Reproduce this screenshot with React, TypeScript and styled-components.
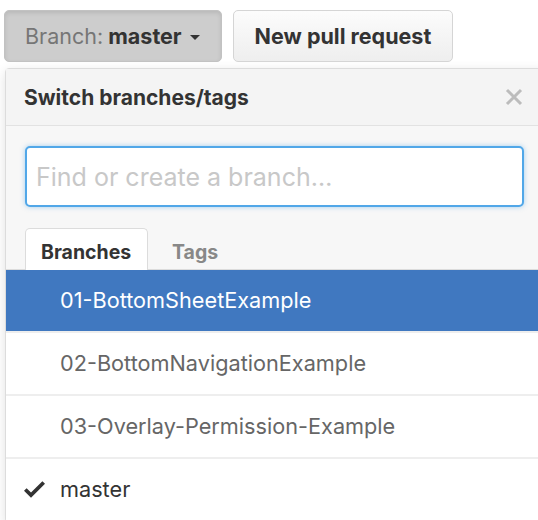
import React from "react";
import styled, { createGlobalStyle } from "styled-components";

const Global = createGlobalStyle`
  html, body { margin: 0; padding: 0; background: #fff; overflow: hidden; }
  body { font-family: Inter, "Liberation Sans", Arial, sans-serif; }
`;

const FONT = `Inter, "Liberation Sans", Arial, sans-serif`;

const Page = styled.div`
  width: 538px;
  height: 520px;
  overflow: hidden;
`;

const Toolbar = styled.div`
  display: flex;
  gap: 11px;
  padding: 10px 0 0 4px;
`;

const Button = styled.button<{ $pressed?: boolean }>`
  height: 52px;
  padding: 0 21px 0 ${(p) => (p.$pressed ? "20px" : "21px")};
  border-radius: 5px;
  font-family: ${FONT};
  font-size: 21.5px;
  font-weight: 700;
  color: #333;
  display: flex;
  align-items: center;
  gap: 7px;
  border: 1px solid ${(p) => (p.$pressed ? "#c2c2c2" : "#d5d5d5")};
  background: ${(p) =>
    p.$pressed ? "#cdcdcd" : "linear-gradient(#fcfcfc, #eeeeee)"};
  box-shadow: ${(p) => (p.$pressed ? "inset 0 2px 4px rgba(0,0,0,0.1)" : "none")};
`;

const Muted = styled.span`
  color: #767676;
  font-weight: normal;
`;

const Caret = styled.span`
  width: 0;
  height: 0;
  border-left: 5px solid transparent;
  border-right: 5px solid transparent;
  border-top: 5px solid #333;
  margin-left: 1px;
  margin-top: 3px;
`;

const Panel = styled.div`
  margin: 6px 0 0 5px;
  width: 540px;
  border: 1px solid #dcdcdc;
  border-radius: 4px;
  background: #f7f7f7;
  box-shadow: 0 3px 12px rgba(0, 0, 0, 0.12);
`;

const Header = styled.div`
  height: 57px;
  display: flex;
  align-items: center;
  justify-content: space-between;
  padding: 0 14px 0 18px;
  background: #f4f4f4;
  border-bottom: 1px solid #e2e2e2;
  box-sizing: border-box;
  width: 532px;
`;

const Title = styled.span`
  font-size: 21px;
  font-weight: 700;
  color: #333;
`;

const Close = styled.svg`
  width: 20px;
  height: 20px;
`;

const FilterArea = styled.div`
  padding: 20px 19px 0 19px;
`;

const Input = styled.input`
  box-sizing: border-box;
  width: 499px;
  height: 61px;
  border: 2px solid #51a7e8;
  border-radius: 5px;
  padding: 0 9px;
  font-family: ${FONT};
  font-size: 25px;
  color: #333;
  background: #fff;
  box-shadow: 0 0 5px rgba(81, 167, 232, 0.5);
  outline: none;
  &::placeholder { color: #c8c8c8; }
`;

const Tabs = styled.div`
  display: flex;
  margin-top: 21px;
  padding-left: 19px;
  border-bottom: 1px solid #dcdcdc;
  height: 41px;
`;

const Tab = styled.div<{ $active?: boolean }>`
  box-sizing: border-box;
  height: 42px;
  padding: 4px 15px 0 15px;
  display: flex;
  align-items: center;
  font-size: 19.5px;
  font-weight: 700;
  color: ${(p) => (p.$active ? "#333" : "#888")};
  background: ${(p) => (p.$active ? "#fff" : "transparent")};
  border: 1px solid ${(p) => (p.$active ? "#dcdcdc" : "transparent")};
  border-bottom: none;
  border-radius: 5px 5px 0 0;
  width: ${(p) => (p.$active ? "123px" : "auto")};
  margin-left: ${(p) => (p.$active ? "0" : "8px")};
`;

const List = styled.div`
  background: #fff;
`;

const Row = styled.div<{ $selected?: boolean }>`
  box-sizing: border-box;
  height: 63px;
  display: flex;
  align-items: center;
  padding-left: 18px;
  padding-bottom: 1px;
  font-size: 21.7px;
  color: ${(p) => (p.$selected ? "#fff" : "#666")};
  background: ${(p) => (p.$selected ? "#4078c0" : "#fff")};
  border-bottom: 2px solid #eeeeee;
`;

const CheckSlot = styled.span`
  width: 36px;
  display: flex;
  align-items: center;
`;

const RowLabel = styled.span<{ $current?: boolean }>`
  color: ${(p) => (p.$current ? "#333" : "inherit")};
`;

const branches = [
  "01-BottomSheetExample",
  "02-BottomNavigationExample",
  "03-Overlay-Permission-Example",
  "master",
];

export default function App() {
  return (
    <Page>
      <Global />
      <Toolbar>
        <Button $pressed>
          <span>
            <Muted>Branch:</Muted> master
          </span>
          <Caret />
        </Button>
        <Button>New pull request</Button>
      </Toolbar>
      <Panel>
        <Header>
          <Title>Switch branches/tags</Title>
          <Close viewBox="0 0 20 20">
            <path d="M3 3 L17 17 M17 3 L3 17" stroke="#bcbcbc" strokeWidth="3" />
          </Close>
        </Header>
        <FilterArea>
          <Input placeholder="Find or create a branch…" />
        </FilterArea>
        <Tabs>
          <Tab $active>Branches</Tab>
          <Tab>Tags</Tab>
        </Tabs>
        <List>
          {branches.map((b, i) => (
            <Row key={b} $selected={i === 0}>
              <CheckSlot>
                {b === "master" && (
                  <svg width="21" height="28" viewBox="0 0 12 16">
                    <path d="M12 5l-8 8-4-4 1.5-1.5L4 10l6.5-6.5L12 5z" fill="#333" />
                  </svg>
                )}
              </CheckSlot>
              <RowLabel $current={b === "master"}>{b}</RowLabel>
            </Row>
          ))}
        </List>
      </Panel>
    </Page>
  );
}
